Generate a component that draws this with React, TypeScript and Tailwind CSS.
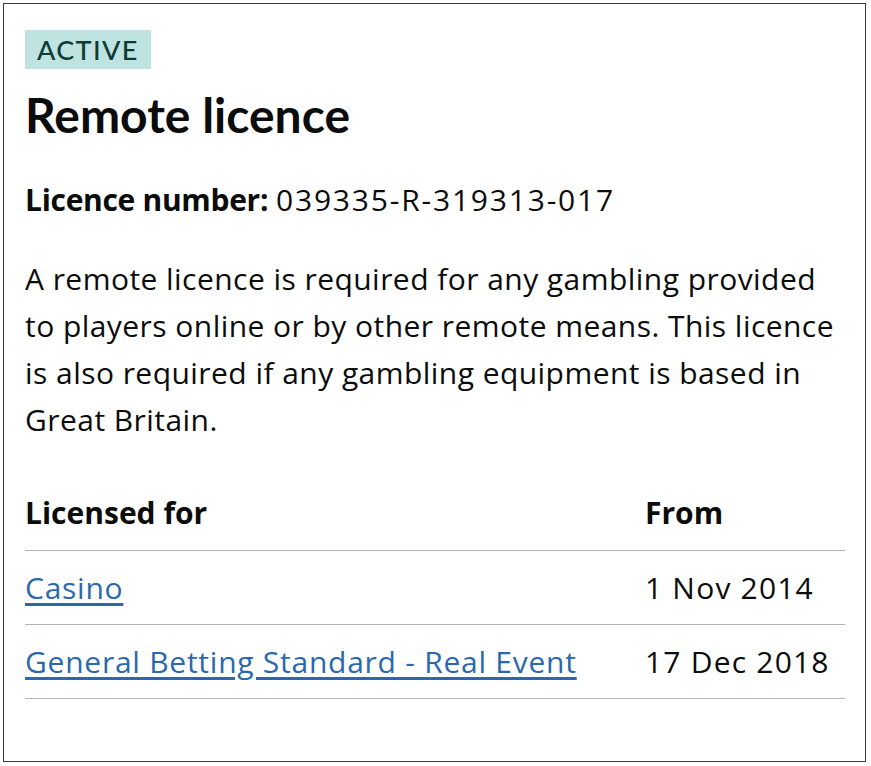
export default function App() {
  return (
    <div className="w-[871px] h-[766px] bg-white p-[3px]" style={{ fontFamily: "'Open Sans', 'Noto Sans', sans-serif" }}>
      <div className="h-[759px] w-[863px] border border-[#3b3b3b] pt-[26px] pl-[21px] pr-[19px] text-[#0b0c0c]">
        {/* Status badge */}
        <span className="inline-block bg-[#bfe3e0] text-[#0d3b38] text-[27px] leading-[39px] h-[39px] px-[12px] tracking-[0.05em] font-medium" style={{ fontFamily: "Lato, sans-serif" }}>
          ACTIVE
        </span>

        <h2 className="mt-[18px] text-[48px] leading-[56px] font-bold" style={{ fontFamily: "Lato, sans-serif" }}>
          Remote licence
        </h2>

        <p className="mt-[33px] text-[30px] leading-[47px]">
          <span className="font-bold tracking-[-0.01em]">Licence number:</span>{" "}
          <span className="tracking-[0.06em]">039335-R-319313-017</span>
        </p>

        <p className="mt-[32px] text-[30px] leading-[47px] tracking-[0.015em]">
          A remote licence is required for any gambling provided to players online or by other remote means. This licence is also required if any gambling equipment is based in Great Britain.
        </p>

        {/* Licensed activities */}
        <table className="mt-[33px] w-[820px] text-[30px] border-collapse">
          <thead>
            <tr className="border-b border-[#b1b4b6] h-[74px]">
              <th className="text-left font-bold w-[620px] p-0">Licensed for</th>
              <th className="text-left font-bold p-0">From</th>
            </tr>
          </thead>
          <tbody>
            <tr className="border-b border-[#b1b4b6] h-[74px]">
              <td className="p-0 tracking-[0.025em]">
                <a href="#" className="text-[#2a69ad] underline decoration-[3px] underline-offset-[4px]">Casino</a>
              </td>
              <td className="p-0 tracking-[0.04em]">1 Nov 2014</td>
            </tr>
            <tr className="border-b border-[#b1b4b6] h-[74px]">
              <td className="p-0 tracking-[0.025em]">
                <a href="#" className="text-[#2a69ad] underline decoration-[3px] underline-offset-[4px]">General Betting Standard - Real Event</a>
              </td>
              <td className="p-0 tracking-[0.04em]">17 Dec 2018</td>
            </tr>
          </tbody>
        </table>
      </div>
    </div>
  );
}
